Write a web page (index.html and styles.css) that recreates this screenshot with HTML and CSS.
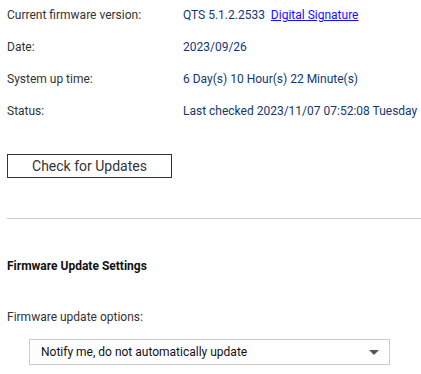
FILE: index.html
```html
<!DOCTYPE html>
<html>
<head>
    <link rel="stylesheet" href="styles.css">
</head>
<body>

<div class="info">
  <div class="row">
    <span class="label">Current firmware version:</span>
    <span class="value">QTS 5.1.2.2533 <a class="sig" href="#">Digital Signature</a></span>
  </div>
  <div class="row">
    <span class="label">Date:</span>
    <span class="value">2023/09/26</span>
  </div>
  <div class="row">
    <span class="label">System up time:</span>
    <span class="value">6 Day(s) 10 Hour(s) 22 Minute(s)</span>
  </div>
  <div class="row">
    <span class="label">Status:</span>
    <span class="value">Last checked 2023/11/07 07:52:08 Tuesday</span>
  </div>
</div>

<button class="check-btn">Check for Updates</button>

<hr class="divider">

<div class="section-title">Firmware Update Settings</div>

<div class="opt-label">Firmware update options:</div>

<div class="select-box">
  <span>Notify me, do not automatically update</span>
  <span class="arrow"></span>
</div>

</body>
</html>
```

FILE: styles.css
```css
body{
  margin: 0;
  padding: 0 0 0 7px;
  font-family: Roboto, "Liberation Sans", sans-serif;
  font-size: 12px;
  color: #333;
  background-color: #fff;
}

.info{
  padding-top: 8px;
}

.row{
  display: flex;
  height: 32px;
  line-height: 15px;
}

.label{
  width: 176px;
}

.value{
  color: #14386b;
}

.sig{
  color: #1a0dff;
  margin-left: 3px;
}

.check-btn{
  display: block;
  margin-top: 18px;
  width: 165px;
  height: 24px;
  border: 1px solid #333;
  background: #fff;
  font-family: Roboto, "Liberation Sans", sans-serif;
  font-size: 14px;
  color: #333;
  padding: 0;
}

.divider{
  border: none;
  border-top: 1px solid #ccc;
  margin: 40px 0 0 0;
}

.section-title{
  font-weight: bold;
  color: #111;
  margin-top: 40px;
  line-height: 15px;
}

.opt-label{
  margin-top: 36px;
  line-height: 15px;
}

.select-box{
  display: flex;
  justify-content: space-between;
  align-items: center;
  box-sizing: border-box;
  margin: 14px 0 0 22px;
  width: 361px;
  height: 26px;
  border: 1px solid #ccc;
  padding: 0 10px 0 11px;
  color: #111;
}

.arrow{
  width: 0;
  height: 0;
  border-left: 5px solid transparent;
  border-right: 5px solid transparent;
  border-top: 5px solid #555;
}
```
